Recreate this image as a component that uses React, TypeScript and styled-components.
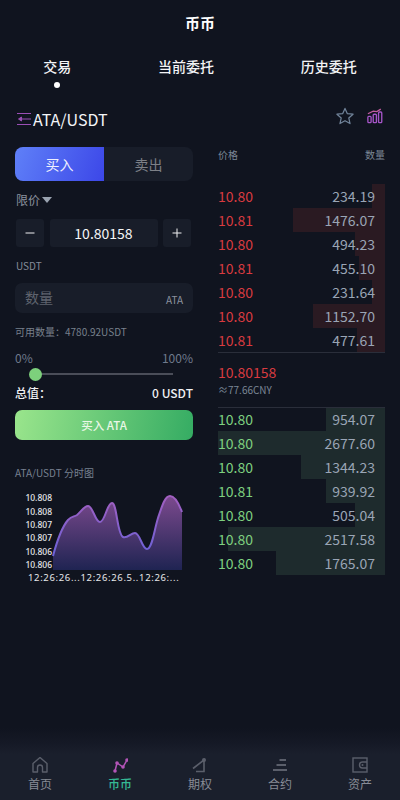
import React from "react";
import styled, { createGlobalStyle } from "styled-components";

const Global = createGlobalStyle`
  html, body { margin: 0; padding: 0; background: #10141f; }
  * { box-sizing: border-box; }
  body { font-family: "Noto Sans CJK SC", "Noto Sans", sans-serif; }
`;

const Page = styled.div`
  width: 400px; height: 800px; overflow: hidden; display: flex; flex-direction: column;
  background: #10141f; color: #fff;
`;
const Title = styled.header`
  height: 44px; display: flex; align-items: center; justify-content: center;
  font-size: 15px; font-weight: 700; color: #fff;
`;
const Tabs = styled.nav`
  height: 50px; display: flex; justify-content: space-around; padding-top: 10px;
`;
const Tab = styled.div<{ $active?: boolean }>`
  position: relative; font-size: 14px; font-weight: 500; line-height: 24px; height: 24px; color: #f2f3f5;
  ${(p) => p.$active && `&::after { content: ""; position: absolute; left: 50%; top: 28px; width: 6px; height: 6px; margin-left: -3px; border-radius: 50%; background: #fff; }`}
`;
const PairRow = styled.div`
  height: 53px; padding: 0 17px 4px 17px; display: flex; align-items: center; justify-content: space-between;
`;
const PairName = styled.div`
  display: flex; align-items: center; gap: 2px; font-size: 16px; font-weight: 400; color: #f4f5f7;
`;
const PairIcons = styled.div`
  display: flex; align-items: center; gap: 13px; padding-bottom: 5px;
`;
const Columns = styled.main`
  display: grid; grid-template-columns: 178px 167px; column-gap: 25px; padding-left: 15px;
`;
const LeftCol = styled.section`
  display: flex; flex-direction: column;
`;
const Toggle = styled.div`
  height: 34px; display: flex; border-radius: 8px; background: #181d29; overflow: hidden;
`;
const ToggleItem = styled.div<{ $active?: boolean }>`
  flex: 1; display: flex; align-items: center; justify-content: center; font-size: 14px;
  color: ${(p) => (p.$active ? "#eef0ff" : "#7d8087")};
  background: ${(p) => (p.$active ? "linear-gradient(110deg, #5f80f8, #3c47e8)" : "transparent")};
`;
const LimitRow = styled.div`
  height: 38px; display: flex; align-items: center; gap: 2px; padding: 0 0 2px 1px; font-size: 12px; color: #8b929e;
`;
const Caret = styled.span`
  width: 0; height: 0; border-left: 5px solid transparent; border-right: 5px solid transparent; border-top: 6px solid #9aa3b0; margin-top: 1px;
`;
const Stepper = styled.div`
  height: 28px; display: flex; padding: 0 2px 0 1px; justify-content: space-between;
`;
const StepBtn = styled.div`
  width: 28px; background: #181d29; border-radius: 3px; display: flex; align-items: center; justify-content: center;
`;
const StepValue = styled.div`
  width: 108px; background: #181d29; border-radius: 3px; display: flex; align-items: center; justify-content: center;
  font-size: 14px; font-weight: 400; color: #f4f5f7;
`;
const UnitLabel = styled.div`
  height: 36px; padding: 0 0 0 1px; display: flex; align-items: center; font-size: 10px; color: #858c99;
`;
const QtyBox = styled.div`
  height: 30px; border-radius: 7px; background: #181d29; display: flex; align-items: center; justify-content: space-between;
  padding: 0 10px 2px 10px; font-size: 14px; color: #5f646e;
`;
const QtyUnit = styled.span`
  font-size: 10px; color: #8b929e; padding-top: 4px;
`;
const Avail = styled.div`
  height: 36px; display: flex; align-items: center; font-size: 10px; color: #78808c;
`;
const PercentRow = styled.div`
  display: flex; justify-content: space-between; font-size: 12px; line-height: 16px; height: 16px; margin-top: 1px; color: #6f7a8c;
`;
const SliderWrap = styled.div`
  height: 16px; padding: 0 20px 0 20px; display: flex; align-items: center; position: relative;
`;
const SliderTrack = styled.div`
  flex: 1; height: 2px; background: #4a4d58;
`;
const SliderKnob = styled.span`
  position: absolute; left: 14px; top: 2px; width: 13px; height: 13px; border-radius: 50%; background: #7dd07c;
`;
const TotalRow = styled.div`
  display: flex; justify-content: space-between; align-items: center; height: 20px; font-size: 12px; font-weight: 500; color: #f0f1f3;
`;
const BuyButton = styled.div`
  height: 30px; margin-top: 8px; border-radius: 7px; display: flex; align-items: center; justify-content: center;
  font-size: 11.5px; font-weight: 500; color: #e9f7e6;
  background: linear-gradient(100deg, #9ae58c, #35ac63);
`;
const ChartTitle = styled.div`
  margin-top: 24px; height: 18px; line-height: 18px; font-size: 10px; color: #778090;
`;
const ChartSvg = styled.svg`
  display: block; margin-top: 7px;
`;
const RightCol = styled.section`
  display: flex; flex-direction: column;
`;
const BookHead = styled.div`
  height: 37px; display: flex; justify-content: space-between; align-items: flex-start; font-size: 10px; line-height: 16px; color: #7b8796;
`;
const BookRow = styled.div`
  position: relative; height: 24px; display: flex; justify-content: space-between; align-items: center; font-size: 14px; line-height: 24px;
`;
const BookBar = styled.span<{ $side: "ask" | "bid" }>`
  position: absolute; top: 0; bottom: 0; right: 0; background: ${(p) => (p.$side === "ask" ? "#2a1a22" : "#1e2b2d")};
`;
const Price = styled.span<{ $side: "ask" | "bid" }>`
  position: relative; color: ${(p) => (p.$side === "ask" ? "#d83b40" : "#7ed07f")};
`;
const Qty = styled.span`
  position: relative; padding-right: 10px; color: #9aa5b5;
`;
const Mid = styled.div`
  position: relative; z-index: 1; height: 56px; margin-bottom: -1px; border-top: 1px solid #2a2e3a; border-bottom: 1px solid #2a2e3a;
  display: flex; flex-direction: column; justify-content: center;
`;
const MidPrice = styled.div`
  font-size: 14px; line-height: 19px; color: #d83b40;
`;
const MidCny = styled.div`
  font-size: 10px; line-height: 15px; color: #7b8796;
`;
const BottomNav = styled.footer`
  margin-top: auto; height: 57px; display: flex; padding-top: 14px;
  background: linear-gradient(180deg, #151926, #1a1f2c 20%);
`;
const NavItem = styled.div<{ $active?: boolean }>`
  flex: 1; display: flex; flex-direction: column; align-items: center; gap: 3px; font-size: 12px; line-height: 16px;
  color: ${(p) => (p.$active ? "#35b894" : "#878b95")};
  font-weight: ${(p) => (p.$active ? 500 : 400)};
`;
const NavIcon = styled.svg`
  display: block; width: 16px; height: 16px;
`;
const Fade = styled.div`
  position: absolute; left: 0; right: 0; top: 728px; height: 15px; background: linear-gradient(180deg, rgba(21,25,38,0), #151926);
`;

const asks = [["10.80","234.19",13],["10.81","1476.07",92],["10.80","494.23",30],["10.81","455.10",26],["10.80","231.64",13],["10.80","1152.70",72],["10.81","477.61",28]] as const;
const bids = [["10.80","954.07",59],["10.80","2677.60",167],["10.80","1344.23",84],["10.81","939.92",59],["10.80","505.04",30],["10.80","2517.58",157],["10.80","1765.07",109]] as const;

const curve = "M38 67 C42 52 47 38 53 31 C57 27 59 28 62 26 C66 23 69 17 73 17 C78 17 80 33 85 33 C90 33 92 14 97 14 C102 14 102 45 108 48 C112 50 116 44 120 44 C125 44 127 60 132 60 C137 60 139 42 143 29 C147 17 150 7 155 7 C160 7 164 15 167 23";

const yLabels: [string, number][] = [["10.808",10],["10.808",24],["10.807",37],["10.807",50],["10.806",64],["10.806",77]];

export default function App() {
  return (
    <Page>
      <Global />
      <Title>币币</Title>
      <Tabs>
        <Tab $active>交易</Tab>
        <Tab>当前委托</Tab>
        <Tab>历史委托</Tab>
      </Tabs>
      <PairRow>
        <PairName>
          <svg width="14" height="12" viewBox="0 0 14 12" fill="none" stroke="#9a4fb5" strokeWidth="1">
            <path d="M0 0.5H14M5 6H14M0 11.5H14" />
            <path d="M4.5 4L1.5 6L4.5 8Z" fill="#9a4fb5" />
          </svg>
          ATA/USDT
        </PairName>
        <PairIcons>
          <svg width="18" height="18" viewBox="0 0 19 19" fill="none" stroke="#71849a" strokeWidth="1.3" strokeLinejoin="round">
            <path d="M9.5 1.5L12 7L18 7.6L13.5 11.6L14.8 17.5L9.5 14.5L4.2 17.5L5.5 11.6L1 7.6L7 7Z" />
          </svg>
          <svg width="16" height="16" viewBox="0 0 18 17" fill="none" stroke="#a655c8" strokeWidth="1.5">
            <rect x="1" y="9" width="3.6" height="7" rx="1" />
            <rect x="7" y="6.5" width="3.6" height="9.5" rx="1" />
            <rect x="13" y="4" width="3.6" height="12" rx="1" />
            <path d="M1 6L7 3L11 3.5L15.5 0.8" stroke="#c25ca0" />
          </svg>
        </PairIcons>
      </PairRow>
      <Columns>
        <LeftCol>
          <Toggle>
            <ToggleItem $active>买入</ToggleItem>
            <ToggleItem>卖出</ToggleItem>
          </Toggle>
          <LimitRow>限价<Caret /></LimitRow>
          <Stepper>
            <StepBtn>
              <svg width="10" height="10" viewBox="0 0 10 10" stroke="#f0f1f3" strokeWidth="1"><path d="M0.5 5H9.5" /></svg>
            </StepBtn>
            <StepValue>10.80158</StepValue>
            <StepBtn>
              <svg width="10" height="10" viewBox="0 0 10 10" stroke="#f0f1f3" strokeWidth="1"><path d="M0.5 5H9.5M5 0.5V9.5" /></svg>
            </StepBtn>
          </Stepper>
          <UnitLabel>USDT</UnitLabel>
          <QtyBox>数量<QtyUnit>ATA</QtyUnit></QtyBox>
          <Avail>可用数量：4780.92USDT</Avail>
          <PercentRow><span>0%</span><span>100%</span></PercentRow>
          <SliderWrap><SliderTrack /><SliderKnob /></SliderWrap>
          <TotalRow><span>总值：</span><span>0 USDT</span></TotalRow>
          <BuyButton>买入 ATA</BuyButton>
          <ChartTitle>ATA/USDT 分时图</ChartTitle>
          <ChartSvg width="178" height="98" viewBox="0 0 178 98">
            <defs>
              <linearGradient id="area" x1="0" y1="0" x2="0" y2="1">
                <stop offset="0" stopColor="#7c4a8e" />
                <stop offset="1" stopColor="#1f2452" />
              </linearGradient>
              <linearGradient id="line" x1="0" y1="0" x2="0" y2="1">
                <stop offset="0" stopColor="#a25fc0" />
                <stop offset="1" stopColor="#6a62d8" />
              </linearGradient>
            </defs>
            <path d={curve + " V81 H38 Z"} fill="url(#area)" />
            <path d={curve} fill="none" stroke="url(#line)" strokeWidth="2" />
            {yLabels.map(([t, y], i) => (
              <text key={i} x="37" y={y} textAnchor="end" fontSize="8.5" fontWeight="500" fill="#e6e7ea" fontFamily="'Noto Sans', sans-serif" dominantBaseline="middle">{t}</text>
            ))}
            <text x="13" y="92" fontSize="9.5" fill="#e6e7ea" letterSpacing="0.65" fontFamily="'Noto Sans', sans-serif">12:26:26...12:26:26.5..12:26:...</text>
          </ChartSvg>
        </LeftCol>
        <RightCol>
          <BookHead><span>价格</span><span>数量</span></BookHead>
          {asks.map(([p, q, w], i) => (
            <BookRow key={i}>
              <BookBar $side="ask" style={{ width: w }} />
              <Price $side="ask">{p}</Price>
              <Qty>{q}</Qty>
            </BookRow>
          ))}
          <Mid>
            <MidPrice>10.80158</MidPrice>
            <MidCny>≈77.66CNY</MidCny>
          </Mid>
          {bids.map(([p, q, w], i) => (
            <BookRow key={i}>
              <BookBar $side="bid" style={{ width: w }} />
              <Price $side="bid">{p}</Price>
              <Qty>{q}</Qty>
            </BookRow>
          ))}
        </RightCol>
      </Columns>
      <Fade />
      <BottomNav>
        <NavItem>
          <NavIcon viewBox="1 1 16 16" fill="none" stroke="#5b5f6b" strokeWidth="1.4" strokeLinejoin="round">
            <path d="M2 7.5L9 1.5L16 7.5V16H11.5V11.5A2.5 2.5 0 0 0 6.5 11.5V16H2Z" />
          </NavIcon>
          首页
        </NavItem>
        <NavItem $active>
          <NavIcon viewBox="1 1 16 16" fill="none" stroke="#b455b8" strokeWidth="1.5">
            <path d="M4 15L6 7L12 11L16 4" />
            <circle cx="4" cy="15" r="1.8" fill="#b455b8" stroke="none" />
            <circle cx="6" cy="7" r="1.8" fill="#b455b8" stroke="none" />
            <circle cx="12" cy="11" r="1.8" fill="#b455b8" stroke="none" />
            <circle cx="16" cy="4" r="1.8" fill="#b455b8" stroke="none" />
          </NavIcon>
          币币
        </NavItem>
        <NavItem>
          <NavIcon viewBox="1 1 16 16" fill="none" stroke="#5b5f6b" strokeWidth="1.6">
            <path d="M2 12.5L13 4V15.5H5" />
            <circle cx="13" cy="4" r="2" fill="#5b5f6b" stroke="none" />
          </NavIcon>
          期权
        </NavItem>
        <NavItem>
          <NavIcon viewBox="1 1 16 16" fill="none" stroke="#5b5f6b" strokeWidth="2.2">
            <path d="M8.5 4H15M5.5 9H15M2 14H16" />
          </NavIcon>
          合约
        </NavItem>
        <NavItem>
          <NavIcon viewBox="1 1 16 16" fill="none" stroke="#5b5f6b" strokeWidth="1.4">
            <rect x="2" y="2" width="14" height="14" />
            <path d="M16 6H11.5A3 3 0 0 0 11.5 12H16" />
            <circle cx="11.5" cy="9" r="1" fill="#5b5f6b" stroke="none" />
          </NavIcon>
          资产
        </NavItem>
      </BottomNav>
    </Page>
  );
}
